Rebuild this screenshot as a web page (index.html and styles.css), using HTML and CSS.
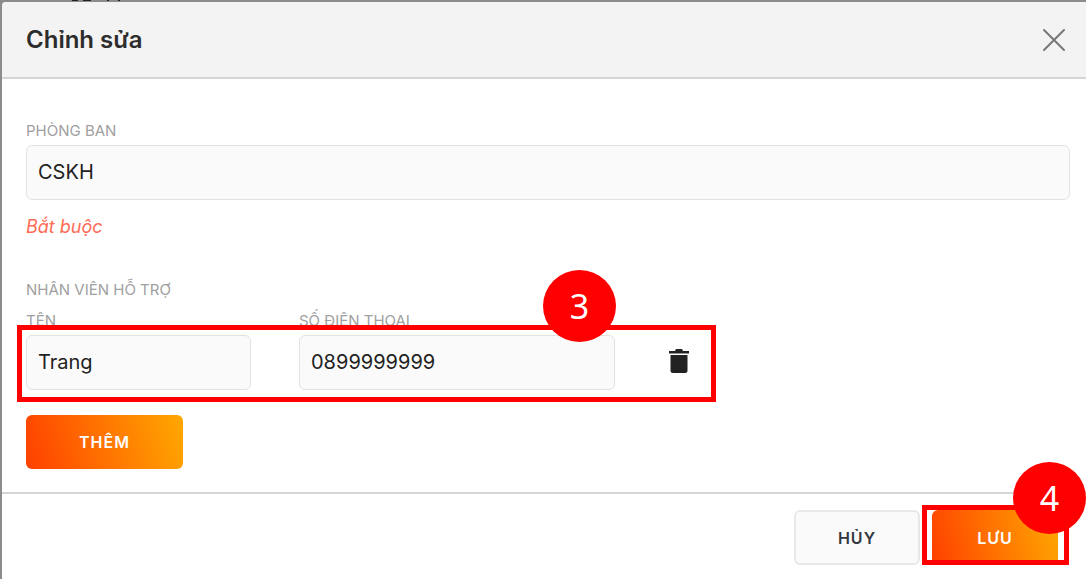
FILE: index.html
```html
<!DOCTYPE html>
<html lang="vi">
<head>
<meta charset="utf-8">
<title>Chỉnh sửa</title>
<link rel="stylesheet" href="styles.css">
</head>
<body>
<form class="modal">
  <header class="modal-header">
    <h1 class="title">Chỉnh sửa</h1>
    <button class="close" type="button" aria-label="Đóng">
      <svg width="24" height="24" viewBox="0 0 24 24" fill="none" stroke="#777" stroke-width="2" stroke-linecap="round"><path d="M2 2 22 22M22 2 2 22"/></svg>
    </button>
  </header>
  <main class="modal-body">
    <label class="label" for="dept">PHÒNG BAN</label>
    <input class="input" id="dept" type="text" value="CSKH">
    <p class="error">Bắt buộc</p>
    <p class="label section">NHÂN VIÊN HỖ TRỢ</p>
    <div class="staff">
      <div class="field name">
        <label class="label" for="name">TÊN</label>
        <input class="input" id="name" type="text" value="Trang">
      </div>
      <div class="field phone">
        <label class="label" for="phone">SỐ ĐIỆN THOẠI</label>
        <input class="input" id="phone" type="text" value="0899999999">
      </div>
      <button class="delete" type="button" aria-label="Xóa">
        <svg width="20" height="24" viewBox="0 0 20 24" fill="#222"><path d="M0 2h6l1-2h6l1 2h6v2.500H0zM1.500 6h17v15.500a2.500 2.500 0 0 1-2.500 2.500H4a2.500 2.500 0 0 1-2.500-2.500z"/></svg>
      </button>
      <span class="frame frame-row"></span>
      <span class="badge badge-row">3</span>
    </div>
    <button class="btn primary add" type="button">THÊM</button>
  </main>
  <footer class="modal-footer">
    <button class="btn secondary" type="button">HỦY</button>
    <div class="save">
      <button class="btn primary" type="submit">LƯU</button>
      <span class="frame frame-save"></span>
      <span class="badge badge-save">4</span>
    </div>
  </footer>
</form>
</body>
</html>
```
FILE: styles.css
```css
* { box-sizing: border-box; }

body {
  margin: 0;
  padding: 2px 0 0 2px;
  min-height: 100vh;
  display: flex;
  background:
    linear-gradient(90deg, transparent 72px, #222 72px 78px, transparent 78px 83px, #222 83px 91px, transparent 91px 107px, #222 107px 109px, transparent 109px 118px, #222 118px 120px, transparent 120px) 0 0 / 100% 1px no-repeat,
    #8c8c8c;
  color: #222;
  font-family: Inter, "Liberation Sans", sans-serif;
}

button, input { font: inherit; color: inherit; }
button { padding: 0; border: 0; background: none; cursor: pointer; }

.modal {
  flex: 1;
  display: flex;
  flex-direction: column;
  background: #fff;
  border-top-left-radius: 4px;
  overflow: hidden;
}

.modal-header {
  display: flex;
  align-items: center;
  justify-content: space-between;
  height: 77px;
  padding: 1px 20px 0 24px;
  background: #f3f3f3;
  border-bottom: 2px solid #d5d5d5;
}

.title {
  margin: 0;
  font-size: 24px;
  line-height: 32px;
  font-weight: 600;
  color: #2c2c2c;
}

.close, .delete { display: flex; }

.modal-body { padding: 42px 16px 23px 24px; }

.label {
  display: block;
  margin: 0 0 4px;
  font-size: 15px;
  line-height: 20px;
  color: #a0a0a0;
}

.input {
  display: block;
  width: 100%;
  height: 55px;
  padding: 0 11px 2px;
  font-size: 20px;
  background: #fafafa;
  border: 1px solid #e2e2e2;
  border-radius: 6px;
}

.error {
  margin: 15px 0 41px;
  font-size: 18px;
  line-height: 24px;
  font-style: italic;
  color: #ff6b55;
}

.section { margin-bottom: 11px; }

.staff {
  position: relative;
  display: flex;
  align-items: flex-end;
  gap: 48px;
  width: 690px;
  max-width: 100%;
}

.name { flex: 0 1 225px; }
.phone { flex: 0 1 316px; }
.delete { height: 55px; align-items: center; margin: 0 0 0 6px; padding-bottom: 4px; }

.frame {
  position: absolute;
  border: 5px solid #f00;
  pointer-events: none;
}

.frame-row { inset: 14px 0 -12px -9px; }
.frame-save { inset: -5px -11px 0 -10px; }

.badge {
  position: absolute;
  display: flex;
  align-items: center;
  justify-content: center;
  width: 73px;
  height: 72px;
  border-radius: 50%;
  background: #f00;
  color: #fff;
  font-family: "Noto Sans", sans-serif;
  font-size: 34px;
  line-height: 40px;
}

.badge-row { left: 517px; top: -41px; }
.badge-save { right: -28px; top: -48px; }

.btn {
  width: 126px;
  height: 55px;
  border-radius: 6px;
  font-size: 16px;
  line-height: 24px;
  font-weight: 600;
  letter-spacing: 1px;
}

.primary {
  color: #fff;
  background: linear-gradient(75deg, #ff4000, #ffa800);
}

.add { width: 157px; height: 54px; margin-top: 25px; }

.secondary {
  color: #333840;
  background: #fafafa;
  border: 2px solid #e8e8e8;
}

.modal-footer {
  flex: 1;
  display: flex;
  align-items: flex-start;
  justify-content: flex-end;
  gap: 12px;
  padding: 16px 28px 14px 24px;
  border-top: 2px solid #d5d5d5;
}

.save { position: relative; display: flex; }
```
